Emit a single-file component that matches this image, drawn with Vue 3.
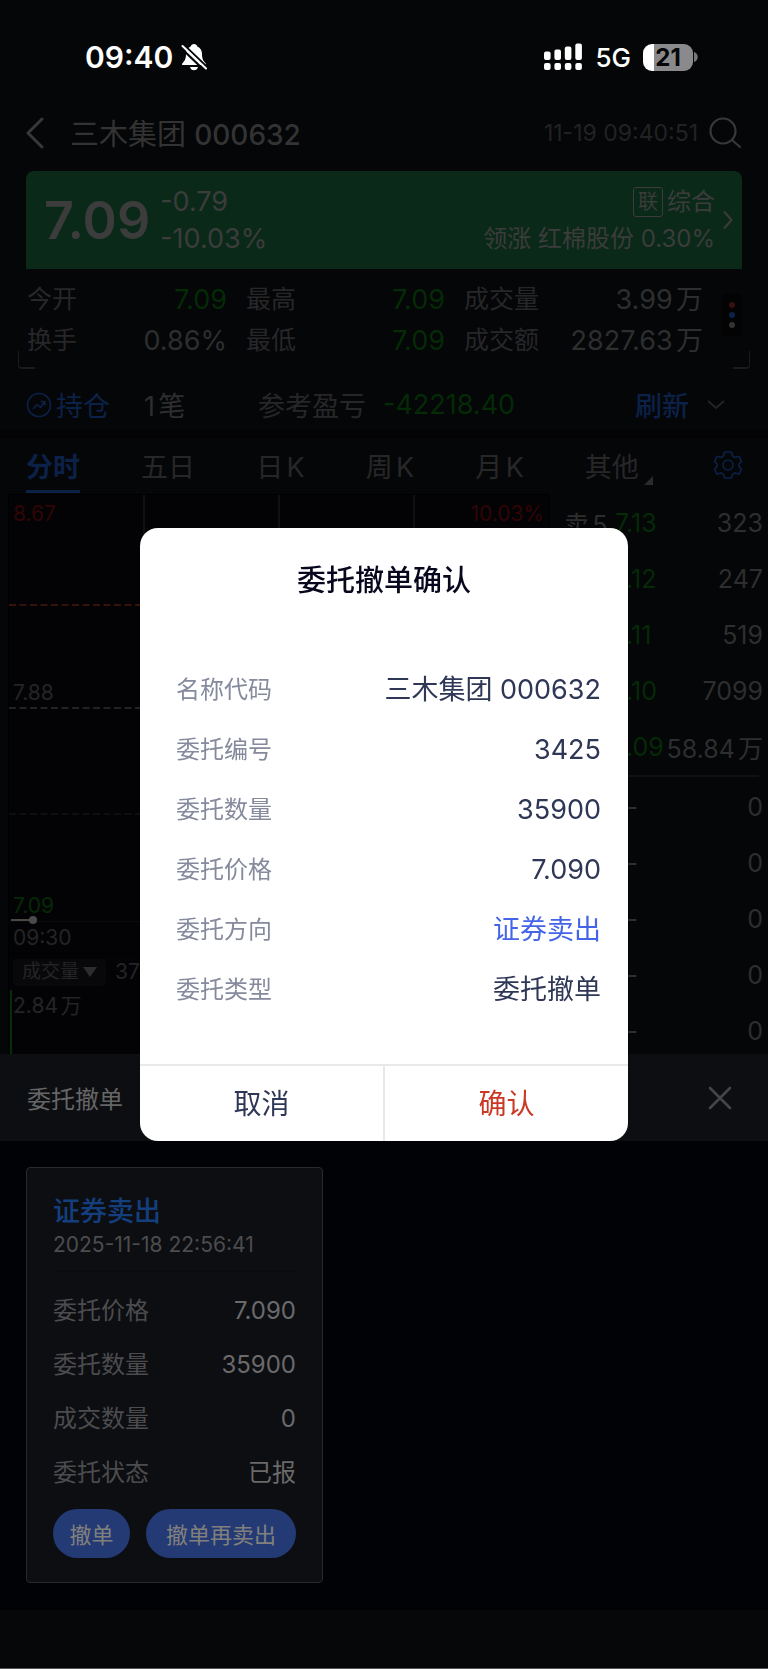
<template>
  <div class="page">
    <div class="status-bar">
      <div class="status-left">
        <span class="clock">09:40</span>
        <svg width="26" height="28" viewBox="0 0 26 28">
          <path d="M13 1c-1.700 0-3 1-3.300 2.400C6.500 4.700 5 7.500 5 11c0 5-1.400 7-3.600 9.200-.8.900-.4 1.800.7 1.800h21.800c1.100 0 1.500-.9.700-1.800C22.400 18 21 16 21 11c0-3.500-1.500-6.300-4.700-7.600C16 2 14.700 1 13 1z" fill="#fff" />
          <path d="M9 24h8c-.5 2-2 3.300-4 3.300S9.500 26 9 24z" fill="#fff" />
          <path d="M-.5 4.500L24 28" stroke="#050608" stroke-width="2.200" />
          <path d="M2.500 1.500L26 24" stroke="#050608" stroke-width="2.200" />
          <path d="M1.500 3L25 25.500" stroke="#fff" stroke-width="2" stroke-linecap="round" />
        </svg>
      </div>
      <div class="status-right">
        <svg width="38" height="28" viewBox="0 0 38 28" fill="#fff">
          <rect x="0" y="8.500" width="6.600" height="8.500" rx="2" />
          <rect x="10.400" y="6.500" width="6.600" height="10.500" rx="2" />
          <rect x="20.800" y="3.500" width="6.600" height="13.500" rx="2" />
          <rect x="31.300" y="0.500" width="6.600" height="16.500" rx="2" />
          <rect v-for="x in [0, 10.4, 20.8, 31.3]" :key="x" :x="x" y="20" width="6.600" height="7" rx="2" />
        </svg>
        <span class="network">5G</span>
        <div class="battery"><span>21</span></div>
        <svg class="battery-cap" width="4" height="10" viewBox="0 0 4 10"><path d="M0 0c5 1.500 5 8.500 0 10z" fill="#78787a" /></svg>
      </div>
    </div>

    <header class="nav-bar">
      <button class="icon-btn" aria-label="返回">
        <svg width="18" height="32" viewBox="0 0 18 32"><path d="M16 2L2 16l14 14" fill="none" stroke="#383839" stroke-width="3" stroke-linecap="round" stroke-linejoin="round" /></svg>
      </button>
      <h1>三木集团 <b>000632</b></h1>
      <time>11-19 09:40:51</time>
      <button class="icon-btn" aria-label="搜索">
        <svg width="32" height="32" viewBox="0 0 32 32" fill="none" stroke="#383839" stroke-width="2.200" stroke-linecap="round"><circle cx="14" cy="14" r="12.500" /><path d="M23 23l8 7" /></svg>
      </button>
    </header>

    <section class="banner">
      <strong>7.09</strong>
      <div class="change">
        <span>-0.79</span>
        <span>-10.03%</span>
      </div>
      <div class="board">
        <div><i>联</i>综合</div>
        <span>领涨 红棉股份 0.30%</span>
      </div>
      <svg width="10" height="20" viewBox="0 0 10 20"><path d="M1.500 2l7 8-7 8" fill="none" stroke="#3c3c3c" stroke-width="2" stroke-linecap="round" stroke-linejoin="round" /></svg>
    </section>

    <section class="stats">
      <dl>
        <div v-for="item in stats" :key="item.label">
          <dt>{{ item.label }}</dt>
          <dd :class="{ down: item.down }">{{ item.value }}</dd>
        </div>
      </dl>
      <button class="more" aria-label="更多">
        <span class="dot red"></span>
        <span class="dot blue"></span>
        <span class="dot"></span>
      </button>
    </section>

    <section class="holding">
      <div class="holding-title">
        <svg width="26" height="26" viewBox="0 0 26 26" fill="none" stroke="#0c2147" stroke-width="1.600"><circle cx="13" cy="13" r="11.500" /><path d="M7 17l4-4.500 3.500 3 4-6M14.500 9.500h4.300v4" stroke-linejoin="round" /></svg>
        持仓
      </div>
      <span class="count">1笔</span>
      <span class="profit-label">参考盈亏</span>
      <span class="down">-42218.40</span>
      <button class="refresh">刷新</button>
      <button class="icon-btn" aria-label="展开">
        <svg width="18" height="10" viewBox="0 0 18 10"><path d="M1 1l8 7 8-7" fill="none" stroke="#242425" stroke-width="2" /></svg>
      </button>
    </section>

    <nav class="tabs">
      <button v-for="(tab, index) in tabs" :key="tab" :class="{ active: activeTab === index }" @click="activeTab = index">
        {{ tab }}
        <svg v-if="index === 5" width="9" height="9" viewBox="0 0 9 9"><path d="M9 0v9H0z" fill="#2b2b2c" /></svg>
      </button>
      <button class="setting" aria-label="设置">
        <svg width="28" height="28" viewBox="0 0 28 28" fill="none" stroke="#0c2147" stroke-width="1.600" stroke-linejoin="round">
          <path d="M10.500 1h7l1 4 2.500 1.500 4-1.200 2.500 5-2.700 3v1.800l2.700 3-2.500 5-4-1.200-2.500 1.500-1 3.600h-7l-1-3.600L7 21.900l-4 1.200-2.500-5 2.700-3v-1.800l-2.700-3 2.500-5 4 1.200L9.500 5z" />
          <circle cx="14" cy="14" r="5" />
        </svg>
      </button>
    </nav>

    <section class="market">
      <div class="chart">
        <div class="plot">
          <svg class="grid-lines" width="100%" height="100%">
            <line v-for="x in ['25%', '50%', '75%']" :key="x" :x1="x" :x2="x" y1="0" y2="100%" stroke="#101013" stroke-width="2" />
            <line x1="0" x2="100%" y1="110" y2="110" stroke="#35120c" stroke-width="2" stroke-dasharray="7 3.500" />
            <line x1="0" x2="100%" y1="213" y2="213" stroke="#222223" stroke-width="2" stroke-dasharray="7 3.500" />
            <line x1="0" x2="100%" y1="319" y2="319" stroke="#0e0e11" stroke-width="2" stroke-dasharray="7 3.500" />
            <line x1="2" x2="25" y1="425" y2="425" stroke="#4a4843" stroke-width="2" />
            <circle cx="24" cy="425" r="4" fill="#4b4b4b" />
          </svg>
          <div class="half">
            <div class="limits"><span>8.67</span><span>10.03%</span></div>
            <span>7.88</span>
          </div>
          <div class="half"><span class="down">7.09</span></div>
        </div>
        <div class="time-axis">09:30</div>
        <div class="volume-bar">
          <button>成交量<svg width="14" height="10" viewBox="0 0 14 10"><path d="M0 0h14L7 10z" fill="#2d2d2e" /></svg></button>
          <span>379</span>
        </div>
        <div class="volume">2.84万</div>
      </div>

      <div class="book">
        <div v-for="row in sells" :key="row.price" class="book-row">
          <span>{{ row.name }}</span>
          <span class="down">{{ row.price }}</span>
          <span>{{ row.amount }}</span>
        </div>
        <hr />
        <div v-for="n in 5" :key="n" class="book-row buy">
          <span></span>
          <span>--</span>
          <span>0</span>
        </div>
      </div>
    </section>

    <section class="sheet">
      <header>
        <h2>委托撤单</h2>
        <button class="icon-btn" aria-label="关闭">
          <svg width="24" height="24" viewBox="0 0 24 24"><path d="M2 2l20 20M22 2L2 22" stroke="#454548" stroke-width="2.600" stroke-linecap="round" /></svg>
        </button>
      </header>
      <div class="orders">
        <article class="order">
          <h3>证券卖出</h3>
          <time>2025-11-18 22:56:41</time>
          <dl>
            <div v-for="item in order" :key="item.label">
              <dt>{{ item.label }}</dt>
              <dd>{{ item.value }}</dd>
            </div>
          </dl>
          <div class="actions">
            <button @click="showDialog = true">撤单</button>
            <button class="wide">撤单再卖出</button>
          </div>
        </article>
      </div>
    </section>
    <div class="home-area"></div>

    <div v-if="showDialog" class="mask">
      <div class="dialog" role="dialog" aria-labelledby="dialog-title">
        <h2 id="dialog-title">委托撤单确认</h2>
        <dl>
          <div v-for="item in details" :key="item.label">
            <dt>{{ item.label }}</dt>
            <dd :class="{ sell: item.sell }">{{ item.value }}</dd>
          </div>
        </dl>
        <div class="dialog-footer">
          <button @click="showDialog = false">取消</button>
          <button class="confirm" @click="showDialog = false">确认</button>
        </div>
      </div>
    </div>
  </div>
</template>

<script setup>
import { ref } from 'vue'

/*------------------- DATA -------------------*/
const showDialog = ref(true)
const activeTab = ref(0)
const tabs = ['分时', '五日', '日K', '周K', '月K', '其他']

const stats = [
  { label: '今开', value: '7.09', down: true },
  { label: '最高', value: '7.09', down: true },
  { label: '成交量', value: '3.99万' },
  { label: '换手', value: '0.86%' },
  { label: '最低', value: '7.09', down: true },
  { label: '成交额', value: '2827.63万' },
]

const sells = [
  { name: '卖5', price: '7.13', amount: '323' },
  { price: '7.12', amount: '247' },
  { price: '7.11', amount: '519' },
  { price: '7.10', amount: '7099' },
  { price: '7.09', amount: '58.84万' },
]

const order = [
  { label: '委托价格', value: '7.090' },
  { label: '委托数量', value: '35900' },
  { label: '成交数量', value: '0' },
  { label: '委托状态', value: '已报' },
]

const details = [
  { label: '名称代码', value: '三木集团 000632' },
  { label: '委托编号', value: '3425' },
  { label: '委托数量', value: '35900' },
  { label: '委托价格', value: '7.090' },
  { label: '委托方向', value: '证券卖出', sell: true },
  { label: '委托类型', value: '委托撤单' },
]
</script>

<style>
body {
  margin: 0;
  background: #050608;
}
</style>

<style scoped>
.page {
  display: flex;
  flex-direction: column;
  min-height: 100vh;
  background: #050608;
  color: #2e2e2f;
  font-family: Inter, 'Noto Sans CJK SC', sans-serif;
  font-size: 24px;
  text-autospace: normal;
}

.page * {
  box-sizing: border-box;
}

h1,
h2,
h3,
dl,
dd {
  margin: 0;
  font-weight: 400;
}

button {
  padding: 0;
  border: 0;
  background: none;
  color: inherit;
  font: inherit;
  cursor: pointer;
}

svg {
  display: block;
  flex: none;
}

.down {
  color: #042a06;
}

.icon-btn {
  display: flex;
}

/* status bar */
.status-bar {
  display: flex;
  justify-content: space-between;
  height: 107px;
  padding: 35px 70px 28px 85px;
  color: #fff;
}

.status-left,
.status-right {
  display: flex;
  align-items: center;
}

.status-left {
  gap: 8px;
}

.clock {
  font-size: 30px;
  font-weight: 600;
}

.network {
  margin: 0 12px 0 13px;
  font-size: 26px;
  font-weight: 500;
}

.battery {
  width: 50px;
  height: 27px;
  border-radius: 9px;
  background: linear-gradient(90deg, #fff 22%, #8a8a8c 22%);
  color: #050608;
  font-size: 24px;
  font-weight: 700;
  line-height: 27px;
  text-align: center;
}

.battery-cap {
  margin-left: 1px;
}

/* header */
.nav-bar {
  display: flex;
  align-items: center;
  height: 52px;
  padding: 0 27px 0 26px;
}

.nav-bar h1 {
  flex: 1;
  margin-left: 26px;
  padding-bottom: 2px;
  font-size: 29px;
  color: #333334;
}

.nav-bar h1 b {
  font-size: 28px;
  font-weight: 500;
}

.nav-bar time {
  margin-right: 11px;
  color: #222223;
  font-size: 23px;
}

/* price banner */
.banner {
  display: flex;
  align-items: center;
  height: 98px;
  margin: 12px 26px 0;
  padding: 0 9px 0 18px;
  border-radius: 8px 8px 0 0;
  background: #0a2919;
  color: #3c3c3c;
  line-height: 37px;
}

.banner strong {
  font-size: 52px;
  font-weight: 600;
}

.change {
  display: flex;
  flex: 1;
  flex-direction: column;
  margin-left: 10px;
  font-size: 27px;
}

.board {
  margin-right: 8px;
  text-align: right;
}

.board div {
  display: flex;
  align-items: center;
  justify-content: flex-end;
  gap: 4px;
}

.board i {
  width: 30px;
  height: 30px;
  border: 1px solid #3c3c3c;
  border-radius: 3px;
  font-size: 20px;
  font-style: normal;
  line-height: 28px;
  text-align: center;
}

/* quote numbers */
.stats {
  position: relative;
  display: flex;
  gap: 20px;
  margin-top: 10px;
  padding: 0 27px 8px;
}

.stats::before,
.stats::after {
  position: absolute;
  bottom: 0;
  width: 16px;
  height: 16px;
  border: solid #1b1b1c;
  content: '';
}

.stats::before {
  left: 18px;
  border-width: 0 0 2px 1px;
  border-radius: 0 0 0 4px;
}

.stats::after {
  right: 18px;
  border-width: 0 1px 2px 0;
  border-radius: 0 0 4px 0;
}

.stats dl {
  display: grid;
  flex: 1;
  grid-template-columns: 200fr 199fr 239fr;
  column-gap: 19px;
  line-height: 41px;
}

.stats dl div {
  display: flex;
  justify-content: space-between;
}

.stats dt {
  color: #272728;
  font-size: 25px;
}

.stats dd {
  font-size: 27px;
}

.more {
  display: flex;
  flex-direction: column;
  align-items: center;
  justify-content: center;
  gap: 4px;
  width: 18px;
  height: 42px;
  margin-top: 15px;
  background: #030304;
}

.dot {
  width: 6px;
  height: 6px;
  border-radius: 50%;
  background: #333;
}

.dot.red {
  background: #380f10;
}

.dot.blue {
  background: #0c2147;
}

/* holding row */
.holding {
  display: grid;
  grid-template-columns: 118px 114px 125px 1fr auto auto;
  align-items: center;
  height: 70px;
  padding: 10px 43px 0 26px;
  border-bottom: 9px solid #030305;
  font-size: 27px;
}

.holding-title {
  display: flex;
  align-items: center;
  gap: 4px;
  color: #0c2147;
}

.profit-label {
  color: #272728;
}

.refresh {
  margin-right: 18px;
  color: #0c2147;
  font-weight: 500;
}

/* period tabs */
.tabs {
  display: flex;
  justify-content: space-between;
  height: 55px;
  padding: 0 26px 1px;
  font-size: 27px;
}

.tabs button {
  display: flex;
  align-items: center;
  padding-bottom: 2px;
  border: solid transparent;
  border-width: 3px 0;
  color: #272728;
}

.tabs button svg {
  margin-left: 5px;
}

.tabs button:nth-child(6) svg {
  align-self: flex-end;
  margin-bottom: 3px;
}

.tabs .setting svg {
  margin: 0;
}

.tabs button.active {
  border-bottom-color: #0c2147;
  color: #0c2147;
  font-weight: 700;
}

/* chart and order book */
.market {
  display: flex;
  height: 560px;
  padding-left: 8px;
  overflow: hidden;
}

.chart {
  display: flex;
  flex: 1;
  flex-direction: column;
  border: 1px solid #000;
  border-bottom: 0;
  background: #030305;
  color: #242425;
  font-size: 21px;
  line-height: 28px;
}

.plot {
  position: relative;
  border-bottom: 1px solid #0b0b0d;
}

.grid-lines {
  position: absolute;
  inset: 0;
  overflow: visible;
}

.half {
  position: relative;
  display: flex;
  flex-direction: column;
  justify-content: flex-end;
  height: 213px;
  padding: 5px 5px 1px 4px;
}

.limits {
  display: flex;
  flex: 1;
  justify-content: space-between;
  color: #310406;
}

.time-axis {
  height: 32px;
  padding: 2px 4px;
  border-bottom: 1px solid #000;
}

.volume-bar {
  display: flex;
  align-items: center;
  gap: 9px;
  height: 36px;
  padding: 0 4px;
}

.volume-bar button {
  display: flex;
  align-items: center;
  gap: 4px;
  height: 27px;
  padding: 0 9px;
  border-radius: 4px;
  background: #08080b;
  font-size: 19px;
}

.volume {
  flex: 1;
  margin-left: 1px;
  padding: 2px 1px;
  border-left: 2px solid #052d08;
}

.book {
  width: 218px;
  padding: 1px 5px 0 14px;
  font-size: 25px;
}

.book-row {
  display: grid;
  grid-template-columns: 51px 46px 1fr;
  align-items: center;
  height: 56px;
  white-space: nowrap;
}

.book-row span:last-child {
  text-align: right;
}

.book-row.buy span:nth-child(2) {
  margin-right: 25px;
  text-align: right;
}

.book hr {
  height: 2px;
  margin: 0 4px 2px 0;
  border: 0;
  background: #101113;
}

/* cancel order sheet */
.sheet {
  padding-bottom: 27px;
  background: #010206;
}

.sheet header {
  display: flex;
  align-items: center;
  justify-content: space-between;
  height: 87px;
  padding: 0 36px 0 27px;
  background: #0d0e12;
}

.sheet h2 {
  color: #666667;
  font-size: 24px;
}

.orders {
  display: grid;
  grid-template-columns: repeat(auto-fill, 297px);
  padding: 26px 26px 0;
}

.order {
  padding: 26px 26px 24px;
  border: 1px solid #29292d;
  border-radius: 4px;
  background: #0d0e12;
  color: #4c4c4e;
}

.order h3 {
  color: #143f7f;
  font-size: 27px;
  font-weight: 500;
  line-height: 36px;
}

.order time {
  display: block;
  font-size: 21px;
  line-height: 30px;
}

.order dl {
  margin-top: 11px;
  padding-top: 12px;
  border-top: 1px solid #0a0b0e;
  line-height: 54px;
}

.order dl div {
  display: flex;
  justify-content: space-between;
}

.order dd {
  color: #6a6a6b;
}

.actions {
  display: flex;
  justify-content: space-between;
  margin-top: 9px;
}

.actions button {
  width: 77px;
  height: 49px;
  padding-bottom: 2px;
  border-radius: 25px;
  background: #243a75;
  color: #82807d;
  font-size: 22px;
}

.actions .wide {
  width: 150px;
}

.home-area {
  flex: 1;
  border-bottom: 1px solid #555;
  background: #060708;
}

/* confirm dialog */
.mask {
  position: fixed;
  inset: 0;
  display: flex;
  align-items: center;
  justify-content: center;
}

.dialog {
  width: 488px;
  max-width: 90%;
  border-radius: 18px;
  background: #fff;
  color: #2f3756;
  overflow: hidden;
}

.dialog h2 {
  padding: 32px 0 58px;
  color: #07071d;
  font-size: 29px;
  font-weight: 500;
  line-height: 42px;
  text-align: center;
}

.dialog dl {
  padding: 0 27px 44px 36px;
  line-height: 60px;
}

.dialog dl div {
  display: flex;
  justify-content: space-between;
}

.dialog dt {
  color: #858a9c;
}

.dialog dd {
  font-size: 27px;
}

.dialog dd.sell {
  color: #4565e8;
}

.dialog-footer {
  display: flex;
  border-top: 2px solid #e9e9ea;
}

.dialog-footer button {
  flex: 1;
  height: 75px;
  padding-bottom: 3px;
  font-size: 28px;
}

.dialog-footer .confirm {
  border-left: 2px solid #e9e9ea;
  color: #cb3825;
}
</style>
